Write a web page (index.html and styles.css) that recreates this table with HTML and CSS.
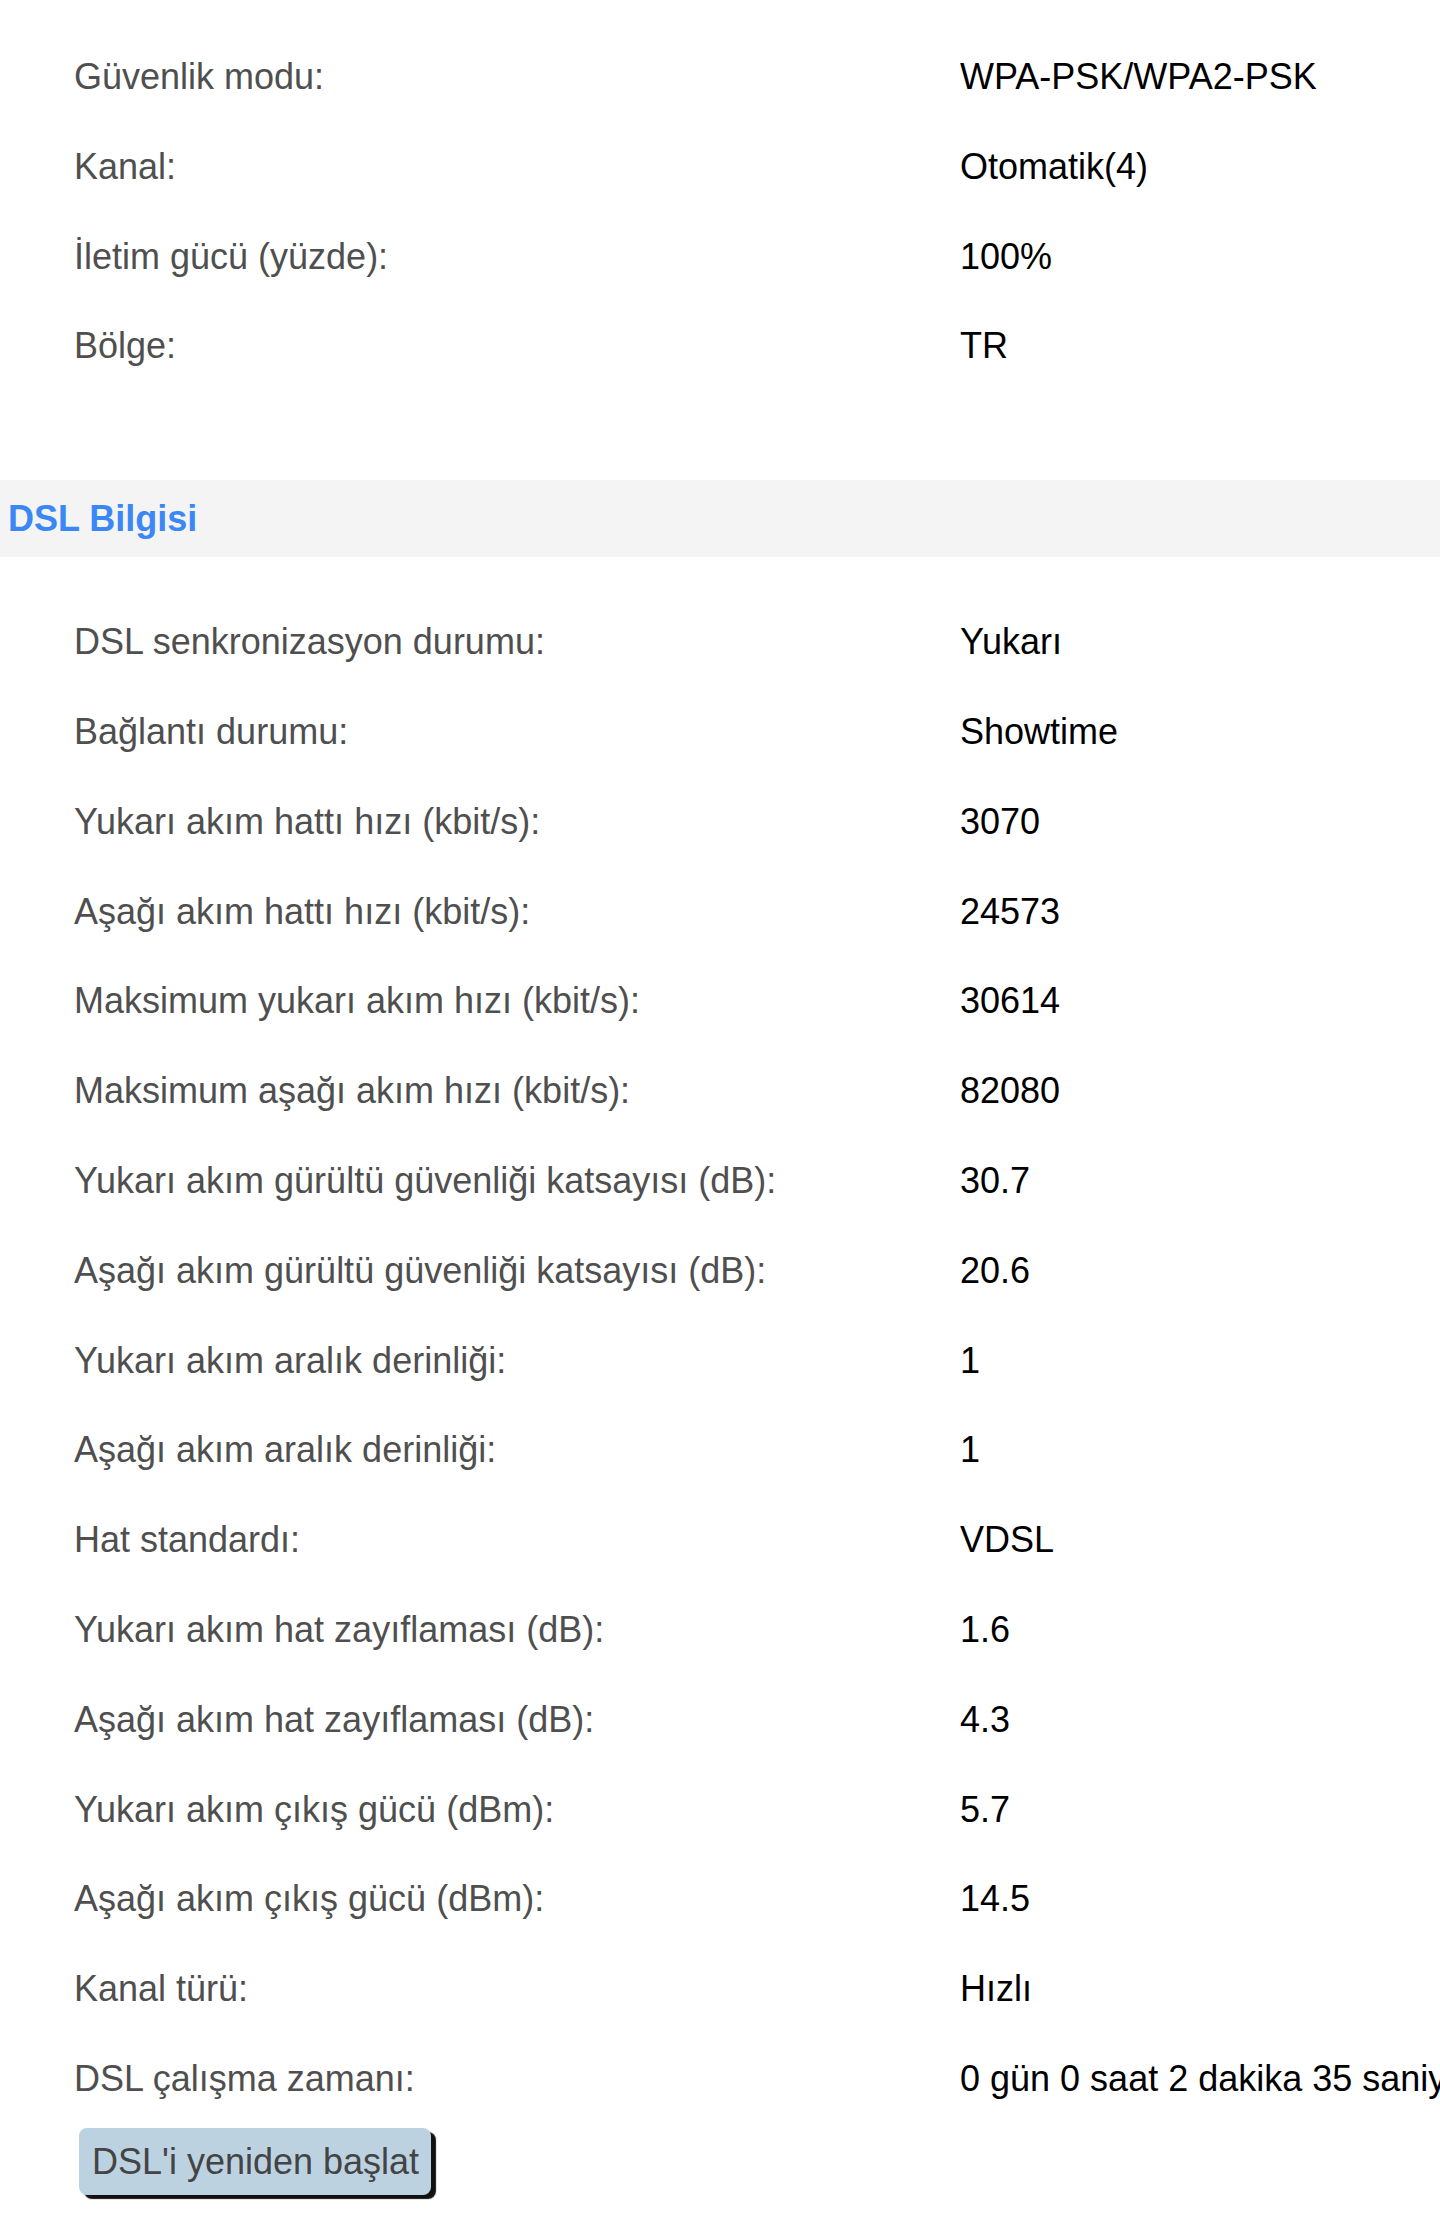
FILE: index.html
```html
<!DOCTYPE html>
<html lang="tr">
<head>
<meta charset="utf-8">
<title>DSL Bilgisi</title>
<link rel="stylesheet" href="styles.css">
</head>
<body>
<div class="page">
  <div class="info info-top">
    <div class="row"><div class="label">Güvenlik modu:</div><div class="value">WPA-PSK/WPA2-PSK</div></div>
    <div class="row"><div class="label">Kanal:</div><div class="value">Otomatik(4)</div></div>
    <div class="row"><div class="label">İletim gücü (yüzde):</div><div class="value">100%</div></div>
    <div class="row"><div class="label">Bölge:</div><div class="value">TR</div></div>
  </div>

  <div class="section-title">DSL Bilgisi</div>

  <div class="info info-dsl">
    <div class="row"><div class="label">DSL senkronizasyon durumu:</div><div class="value">Yukarı</div></div>
    <div class="row"><div class="label">Bağlantı durumu:</div><div class="value">Showtime</div></div>
    <div class="row"><div class="label">Yukarı akım hattı hızı (kbit/s):</div><div class="value">3070</div></div>
    <div class="row"><div class="label">Aşağı akım hattı hızı (kbit/s):</div><div class="value">24573</div></div>
    <div class="row"><div class="label">Maksimum yukarı akım hızı (kbit/s):</div><div class="value">30614</div></div>
    <div class="row"><div class="label">Maksimum aşağı akım hızı (kbit/s):</div><div class="value">82080</div></div>
    <div class="row"><div class="label">Yukarı akım gürültü güvenliği katsayısı (dB):</div><div class="value">30.7</div></div>
    <div class="row"><div class="label">Aşağı akım gürültü güvenliği katsayısı (dB):</div><div class="value">20.6</div></div>
    <div class="row"><div class="label">Yukarı akım aralık derinliği:</div><div class="value">1</div></div>
    <div class="row"><div class="label">Aşağı akım aralık derinliği:</div><div class="value">1</div></div>
    <div class="row"><div class="label">Hat standardı:</div><div class="value">VDSL</div></div>
    <div class="row"><div class="label">Yukarı akım hat zayıflaması (dB):</div><div class="value">1.6</div></div>
    <div class="row"><div class="label">Aşağı akım hat zayıflaması (dB):</div><div class="value">4.3</div></div>
    <div class="row"><div class="label">Yukarı akım çıkış gücü (dBm):</div><div class="value">5.7</div></div>
    <div class="row"><div class="label">Aşağı akım çıkış gücü (dBm):</div><div class="value">14.5</div></div>
    <div class="row"><div class="label">Kanal türü:</div><div class="value">Hızlı</div></div>
    <div class="row"><div class="label">DSL çalışma zamanı:</div><div class="value">0 gün 0 saat 2 dakika 35 saniye</div></div>
  </div>

  <div class="actions">
    <button class="btn" type="button">DSL'i yeniden başlat</button>
  </div>
</div>
</body>
</html>
```

FILE: styles.css
```css
html, body {
  margin: 0;
  padding: 0;
  background: #ffffff;
}

body {
  font-family: "Liberation Sans", Arial, sans-serif;
  font-size: 36px;
  overflow: hidden;
}

.page {
  width: 1440px;
  height: 2239px;
  overflow: hidden;
}

.info {
  display: flex;
  flex-direction: column;
}

.info-top {
  padding-top: 32px;
  margin-bottom: 89px;
}

.info-dsl {
  padding-top: 40px;
}

.row {
  display: grid;
  grid-template-columns: 886px auto;
  padding-left: 74px;
  height: 89.8px;
  line-height: 89.8px;
  white-space: nowrap;
}

.label {
  color: #4f4f4f;
}

.value {
  color: #000000;
}

.section-title {
  background: #f4f4f4;
  height: 77px;
  line-height: 77px;
  padding-left: 8px;
  font-weight: bold;
  color: #3a87f5;
}

.actions {
  padding-top: 4px;
  padding-left: 79px;
}

.btn {
  font-family: "Liberation Sans", Arial, sans-serif;
  font-size: 36px;
  color: #444444;
  background: #bdd2e1;
  border: none;
  border-radius: 8px;
  height: 67px;
  line-height: 67px;
  padding: 0 12px 0 13px;
  box-shadow: 5px 4px 1px #111111;
  white-space: nowrap;
}
```
